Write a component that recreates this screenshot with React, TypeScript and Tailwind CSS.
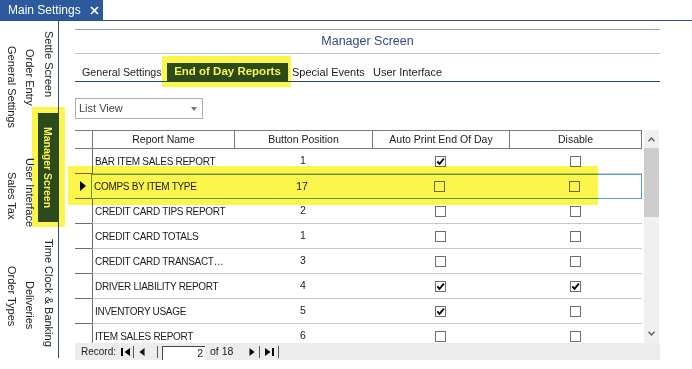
import React from "react"

type Report = {
  name: string
  pos: string
  auto: boolean
  off: boolean
  current?: boolean
}

const reports: Report[] = [
  { name: "BAR ITEM SALES REPORT", pos: "1", auto: true, off: false },
  { name: "COMPS BY ITEM TYPE", pos: "17", auto: false, off: false, current: true },
  { name: "CREDIT CARD TIPS REPORT", pos: "2", auto: false, off: false },
  { name: "CREDIT CARD TOTALS", pos: "1", auto: false, off: false },
  { name: "CREDIT CARD TRANSACT…", pos: "3", auto: false, off: false },
  { name: "DRIVER LIABILITY REPORT", pos: "4", auto: true, off: true },
  { name: "INVENTORY USAGE", pos: "5", auto: true, off: false },
  { name: "ITEM SALES REPORT", pos: "6", auto: false, off: false },
]

function Check({ on }: { on: boolean }) {
  return (
    <span className="flex h-[11px] w-[11px] items-center justify-center border border-[#707070] bg-white">
      {on && (
        <svg width="9" height="9" viewBox="0 0 9 9">
          <path d="M1.3 4.4 L3.5 6.9 L7.9 1.6" fill="none" stroke="#000" strokeWidth="1.8" />
        </svg>
      )}
    </span>
  )
}

function VTab({ label, h }: { label: string; h: string }) {
  return (
    <div className={`flex w-full items-center justify-center ${h}`}>
      <span className="whitespace-nowrap text-[11px] leading-none text-[#222] [writing-mode:vertical-rl]">
        {label}
      </span>
    </div>
  )
}

export default function App() {
  return (
    <div className="relative h-[369px] w-[692px] overflow-hidden bg-white font-['Liberation_Sans',Arial,sans-serif] text-[#1c1c1c]">
      {/* document tab */}
      <div className="flex h-[20px]">
        <div className="flex w-[103px] items-center bg-[#2d5a9c] pl-[8px] text-[12px] text-white">
          <span>Main Settings</span>
          <svg className="ml-[9px]" width="9" height="9" viewBox="0 0 9 9">
            <path d="M1 1 L8 8 M8 1 L1 8" stroke="#fff" strokeWidth="1.7" />
          </svg>
        </div>
      </div>
      <div className="h-px bg-[#2b5290]" />

      <div className="flex">
        {/* vertical tab strip */}
        <aside className="flex h-[337px] w-[59px] border-r border-[#2c4c78] pl-[2px]">
          <div className="flex w-[18px] flex-col">
            <VTab label="General Settings" h="h-[131px]" />
            <VTab label="Sales Tax" h="h-[88px]" />
            <VTab label="Order Types" h="h-[112px]" />
          </div>
          <div className="flex w-[18px] flex-col">
            <VTab label="Order Entry" h="h-[113px]" />
            <VTab label="User Interface" h="h-[118px]" />
            <VTab label="Deliveries" h="h-[106px]" />
          </div>
          <div className="flex w-[20px] flex-col">
            <VTab label="Settle Screen" h="h-[87px]" />
            <div className="flex h-[120px] flex-col pt-[5px]">
              <div className="flex h-[109px] items-center justify-center bg-[#2c4d5c]">
                <span className="whitespace-nowrap text-[10.5px] font-bold leading-none text-white [writing-mode:vertical-rl]">
                  Manager Screen
                </span>
              </div>
            </div>
            <VTab label="Time Clock & Banking" h="h-[130px]" />
          </div>
        </aside>

        <main className="ml-[16px] w-[585px]">
          <div className="mt-[8px] h-px bg-[#8ea5c5]" />
          <div className="flex h-[23px] items-center justify-center text-[12.5px] text-[#2e4a86]">
            Manager Screen
          </div>
          <div className="h-px bg-[#b4c6de]" />

          {/* sub tabs */}
          <div className="flex h-[27px] items-end text-[11px]">
            <div className="flex h-[18px] w-[92px] items-center whitespace-nowrap pl-[7px] text-[10.7px]">General Settings</div>
            <div className="flex h-[18px] w-[121px] items-center justify-center whitespace-nowrap bg-[#2c4d5c] text-[11.5px] font-bold text-white">
              End of Day Reports
            </div>
            <div className="flex h-[18px] w-[81px] items-center whitespace-nowrap pl-[4px]">Special Events</div>
            <div className="flex h-[18px] w-[81px] items-center whitespace-nowrap pl-[4px]">User Interface</div>
          </div>
          <div className="h-px bg-[#2b4766]" />

          {/* view selector */}
          <div className="mt-[16px] flex h-[21px] w-[128px] items-center justify-between border border-[#abadb3] pl-[3px] pr-[5px] text-[11px] text-[#444]">
            <span>List View</span>
            <svg width="6" height="4" viewBox="0 0 6 4">
              <path d="M0 0 L6 0 L3 4Z" fill="#777" />
            </svg>
          </div>

          {/* grid */}
          <div className="mt-[11px] flex h-[213px]">
            <div className="w-[567px] overflow-hidden">
              <div className="flex h-[19px] border-y border-[#7a7a7a] text-[10.5px] text-[#222]">
                <div className="w-[17px]" />
                <div className="flex w-[142px] items-center justify-center border-l border-[#7a7a7a]">Report Name</div>
                <div className="flex w-[138px] items-center justify-center border-l border-[#7a7a7a]">Button Position</div>
                <div className="flex w-[137px] items-center justify-center border-l border-[#7a7a7a]">Auto Print End Of Day</div>
                <div className="flex w-[133px] items-center justify-center border-x border-[#7a7a7a]">Disable</div>
              </div>

              {reports.map((r) => (
                <div key={r.name} className="flex h-[25px]">
                  <div className="flex w-[17px] items-center justify-center border-b border-[#6e6e6e]">
                    {r.current && (
                      <svg width="6" height="10" viewBox="0 0 6 10">
                        <path d="M0 0 L6 5 L0 10Z" fill="#000" />
                      </svg>
                    )}
                  </div>
                  <div
                    className={
                      r.current
                        ? "flex flex-1 border border-[#5b9bd5]"
                        : "flex flex-1 border-b border-l border-b-[#c9c9c9] border-l-[#6e6e6e]"
                    }
                  >
                    <div className="flex w-[141px] items-center whitespace-nowrap pl-[2px] text-[10px] tracking-[-0.3px]">
                      {r.name}
                    </div>
                    <div className="flex w-[138px] items-center justify-center text-[10.5px]">{r.pos}</div>
                    <div className="flex w-[137px] items-center justify-center">
                      <Check on={r.auto} />
                    </div>
                    <div className="flex w-[133px] items-center justify-center">
                      <Check on={r.off} />
                    </div>
                  </div>
                </div>
              ))}
            </div>

            {/* scrollbar */}
            <div className="ml-[2px] flex w-[15px] flex-col bg-[#f0f0f0]">
              <div className="flex h-[18px] items-center justify-center">
                <svg width="7" height="5" viewBox="0 0 7 5">
                  <path d="M0.5 4.2 L3.5 1 L6.5 4.2" fill="none" stroke="#606060" strokeWidth="1.4" />
                </svg>
              </div>
              <div className="h-[69px] bg-[#cdcdcd]" />
              <div className="flex-1" />
              <div className="flex h-[16px] items-center justify-center pb-[3px]">
                <svg width="7" height="5" viewBox="0 0 7 5">
                  <path d="M0.5 0.8 L3.5 4 L6.5 0.8" fill="none" stroke="#606060" strokeWidth="1.4" />
                </svg>
              </div>
            </div>
          </div>

          {/* record navigator */}
          <div className="flex h-[17px] items-center bg-[#ececec] text-[10.5px] text-[#222]">
            <span className="w-[46px] whitespace-nowrap pl-[6px] text-[10px]">Record:</span>
            <div className="flex w-[12px] items-center">
              <svg width="10" height="10" viewBox="0 0 10 10">
                <rect x="0" y="1" width="2" height="8" fill="#000" />
                <path d="M9 1 L3.5 5 L9 9Z" fill="#000" />
              </svg>
            </div>
            <div className="h-[12px] w-px bg-[#555]" />
            <div className="flex w-[23px] items-center pl-[5px]">
              <svg width="6" height="10" viewBox="0 0 6 10">
                <path d="M5.5 1 L0.5 5 L5.5 9Z" fill="#000" />
              </svg>
            </div>
            <div className="h-[12px] w-px bg-[#555]" />
            <div className="ml-[4px] flex h-[14px] w-[43px] items-center justify-end self-end border-l border-t border-[#444] bg-white pr-[2px]">
              2
            </div>
            <span className="ml-[5px] whitespace-nowrap">of 18</span>
            <div className="ml-[16px] flex items-center">
              <svg width="6" height="10" viewBox="0 0 6 10">
                <path d="M0.5 1 L5.5 5 L0.5 9Z" fill="#000" />
              </svg>
            </div>
            <div className="ml-[4px] h-[12px] w-px bg-[#555]" />
            <div className="ml-[4px] flex items-center">
              <svg width="10" height="10" viewBox="0 0 10 10">
                <path d="M1 1 L6.5 5 L1 9Z" fill="#000" />
                <rect x="8" y="1" width="2" height="8" fill="#000" />
              </svg>
            </div>
            <div className="ml-[4px] h-[12px] w-px bg-[#555]" />
          </div>
        </main>
      </div>

      {/* highlighter marks */}
      <div className="pointer-events-none absolute left-[32px] top-[107px] h-[120px] w-[33px] bg-[#fcf54b] mix-blend-multiply" />
      <div className="pointer-events-none absolute left-[162px] top-[56px] h-[31px] w-[129px] bg-[#fcf54b] mix-blend-multiply" />
      <div className="pointer-events-none absolute left-[68px] top-[166px] h-[39px] w-[530px] bg-[#fcf54b] mix-blend-multiply" />
    </div>
  )
}
